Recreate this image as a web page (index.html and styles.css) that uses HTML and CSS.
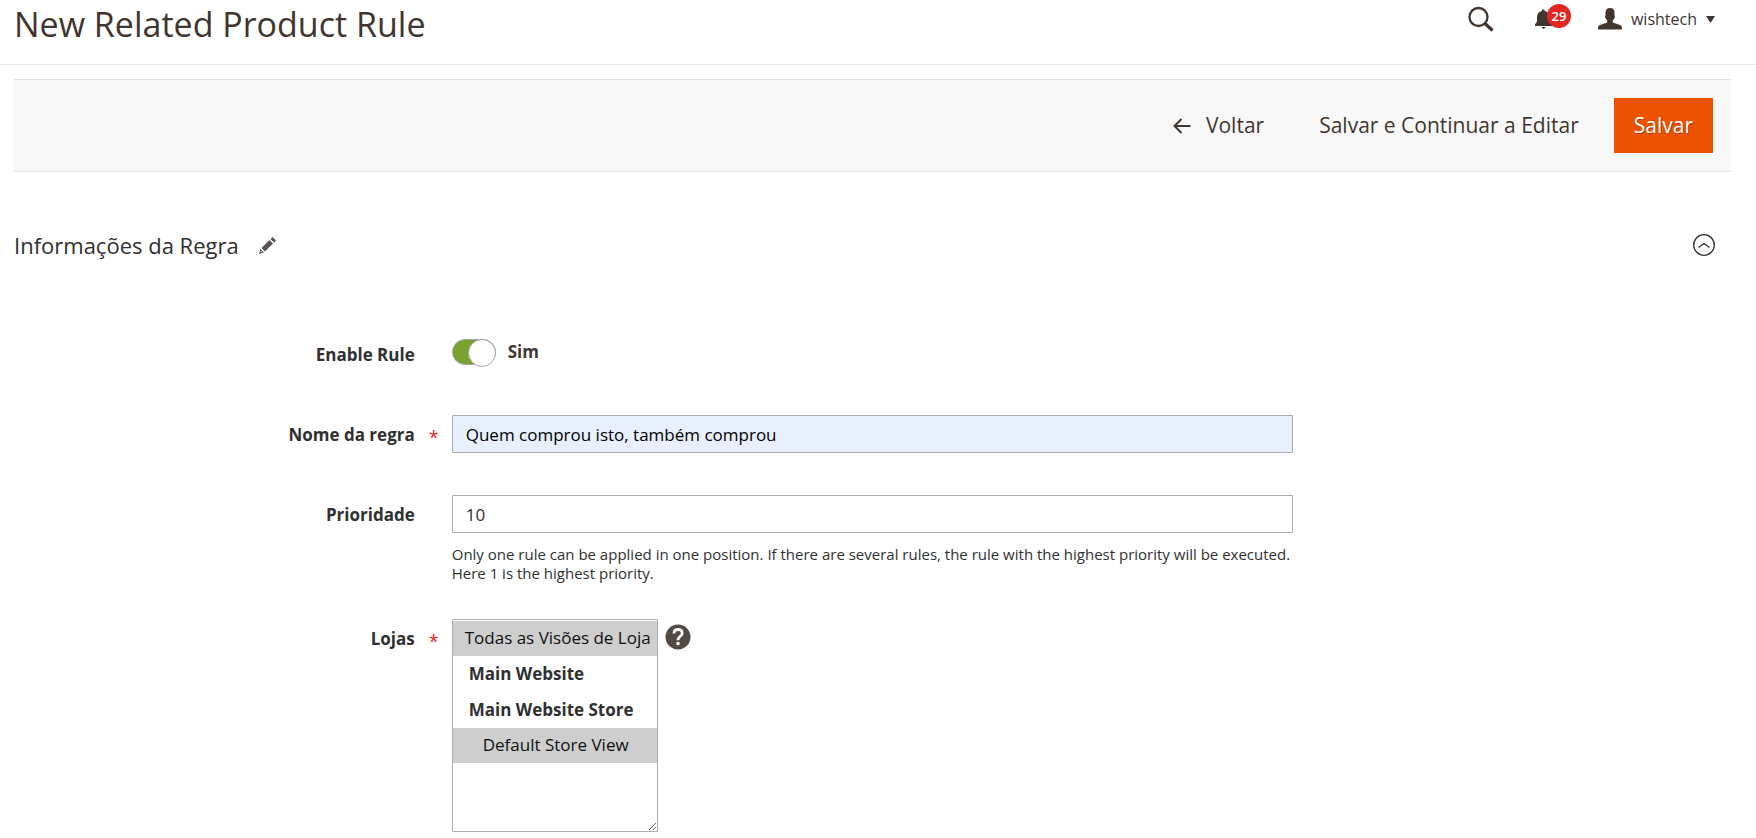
FILE: index.html
```html
<!DOCTYPE html>
<html lang="pt">
<head>
<meta charset="utf-8">
<meta name="viewport" content="width=device-width, initial-scale=1">
<title>New Related Product Rule</title>
<link rel="stylesheet" href="styles.css">
</head>
<body>
<header class="page-header">
  <h1 class="page-title">New Related Product Rule</h1>
  <div class="header-tools">
    <button type="button" class="icon-button" aria-label="Search">
      <svg width="26" height="26" viewBox="0 0 26 26" fill="none" stroke="currentColor"><circle cx="10.500" cy="11" r="9" stroke-width="2.300"/><path d="M17 17.500l7.500 7" stroke-width="3.300"/></svg>
    </button>
    <button type="button" class="icon-button notifications" aria-label="Notifications">
      <svg width="20" height="20" viewBox="0 0 20 20" fill="currentColor"><path d="M0 17v-1.500l2-3V8c0-3 2-5.500 5-6V.500h2.500V2c3 .5 5 3 5 6v4.500l2.500 3V17z"/><path d="M6 18h5l-2.500 2z"/></svg>
      <span class="badge">29</span>
    </button>
    <button type="button" class="account">
      <svg width="24" height="22" viewBox="0 0 24 22" fill="currentColor"><path d="M12 0c3 0 4.500 2 4.500 4.500v3c.8.500.5 2.500-.5 3-.3 1-.7 1.500-1.300 2v2L22 17c1.500.6 2 1.500 2 3v1.500H0V20c0-1.500.5-2.400 2-3l7.300-2.500v-2C8.700 12 8.300 11.500 8 10.500c-1-.5-1.300-2.500-.5-3v-3C7.500 2 9 0 12 0z"/></svg>
      <span>wishtech</span>
      <svg width="9" height="7" viewBox="0 0 9 7" fill="currentColor"><path d="M0 0h9L4.500 7z"/></svg>
    </button>
  </div>
</header>
<main class="page-content">
  <div class="toolbar">
    <button type="button" class="action">
      <svg width="18" height="16" viewBox="0 0 18 16" fill="none" stroke="currentColor" stroke-width="2"><path d="M17.500 8H2M8.500 1L1.500 8l7 7"/></svg>
      Voltar
    </button>
    <button type="button" class="action">Salvar e Continuar a Editar</button>
    <button type="submit" form="rule" class="action primary">Salvar</button>
  </div>
  <div class="section-head">
    <h2 class="section-title">Informações da Regra</h2>
    <svg class="pencil" width="17" height="17" viewBox="0 0 17 17" fill="currentColor"><path d="M2.500 11L10.500 3 14 6.500 6 14.500z"/><path d="M11.500 2L13.500 0 17 3.500 15 5.500z"/><path d="M1.500 12L5 15.500 0 17z"/><path d="M1.800 14l1.400 1.400" stroke="#fff" stroke-width="1"/></svg>
    <button type="button" class="collapse" aria-label="Recolher">
      <svg width="22" height="22" viewBox="0 0 22 22" fill="none" stroke="currentColor"><circle cx="11" cy="11" r="10.300" stroke-width="1.300"/><path d="M5.500 13.500L11 9.500l5.500 4" stroke-width="1.400"/></svg>
    </button>
  </div>
  <form id="rule" class="form">
    <div class="field">
      <label class="label" for="enable">Enable Rule</label>
      <div class="control switch-row">
        <input id="enable" class="switch" type="checkbox" role="switch" checked>
        <span class="switch-text">Sim</span>
      </div>
    </div>
    <div class="field">
      <label class="label" for="name">Nome da regra</label>
      <span class="required">*</span>
      <div class="control"><input id="name" class="text filled" type="text" value="Quem comprou isto, também comprou"></div>
    </div>
    <div class="field">
      <label class="label" for="priority">Prioridade</label>
      <div class="control">
        <input id="priority" class="text" type="text" value="10">
        <p class="note">Only one rule can be applied in one position. If there are several rules, the rule with the highest priority will be executed. Here 1 is the highest priority.</p>
      </div>
    </div>
    <div class="field">
      <label class="label" for="stores">Lojas</label>
      <span class="required">*</span>
      <div class="control store-row">
        <select id="stores" class="stores" multiple size="6">
          <option selected>Todas as Visões de Loja</option>
          <optgroup label="Main Website"></optgroup>
          <optgroup label="Main Website Store">
            <option selected>Default Store View</option>
          </optgroup>
        </select>
        <button type="button" class="help" aria-label="Ajuda">
          <svg width="26" height="26" viewBox="0 0 26 26" fill="none"><circle cx="13" cy="13" r="12.500" fill="currentColor"/><path d="M9 9.500C9 6.500 10.700 5.500 13 5.500s4.200 1.300 4.200 3.700c0 3-4.200 3.300-4.200 7" stroke="#fff" stroke-width="2.800"/><circle cx="13" cy="19.600" r="1.800" fill="#fff"/></svg>
        </button>
      </div>
    </div>
  </form>
</main>
</body>
</html>
```
FILE: styles.css
```css
* {
  box-sizing: border-box;
}

body {
  margin: 0;
  background: #fff;
  color: #303030;
  font-family: "Open Sans", "Noto Sans", sans-serif;
  font-size: 17px;
  line-height: 24px;
}

button,
input,
select {
  font: inherit;
  color: inherit;
}

button {
  padding: 0;
  border: 0;
  background: none;
  cursor: pointer;
}

svg {
  display: block;
  flex: none;
}

.page-header {
  display: flex;
  justify-content: space-between;
  align-items: flex-start;
  height: 65px;
  padding: 0 41px 0 14px;
  border-bottom: 1px solid #e9e9e9;
  color: #41362f;
}

.page-title {
  margin: 0;
  font-size: 34px;
  font-weight: 400;
  line-height: 48px;
}

.header-tools {
  display: flex;
  align-items: center;
  height: 38px;
}

.icon-button {
  position: relative;
  margin-right: 41px;
}

.notifications {
  margin-right: 43px;
}

.badge {
  position: absolute;
  top: -5px;
  left: 12px;
  width: 24px;
  height: 24px;
  border-radius: 12px;
  background: #e22626;
  color: #fff;
  font-size: 13px;
  font-weight: 600;
  line-height: 24px;
  text-align: center;
}

.account {
  display: flex;
  align-items: center;
  gap: 9px;
  font-size: 16px;
}

.page-content {
  padding: 14px 25px 0 14px;
}

.toolbar {
  display: flex;
  justify-content: flex-end;
  align-items: center;
  gap: 15px;
  padding: 18px;
  border: solid #e3e3e3;
  border-width: 1px 0;
  background: #f8f8f8;
}

.action {
  display: flex;
  align-items: center;
  gap: 15px;
  padding: 14px 20px;
  color: #41362f;
  font-size: 21px;
  font-weight: 500;
  line-height: 27px;
}

.primary {
  background: #eb5202;
  color: #fff;
  text-shadow: 1px 1px 0 rgba(0, 0, 0, .25);
}

.section-head {
  display: flex;
  align-items: center;
  gap: 20px;
  padding: 56px 16px 73px 0;
}

.section-title {
  margin: 0;
  font-size: 22px;
  font-weight: 500;
  line-height: 34px;
}

.pencil {
  color: #5a5450;
}

.collapse {
  margin-left: auto;
}

.form {
  display: grid;
  gap: 40px;
}

.field {
  display: grid;
  grid-template-columns: 10fr 9px 21fr 10fr;
  column-gap: 14px;
  padding-right: 23px;
}

.label {
  grid-column: 1;
  font-weight: 700;
  line-height: 40px;
  text-align: right;
}

.required {
  grid-column: 2;
  height: 40px;
  color: #e22626;
  font-size: 18px;
  line-height: 44px;
}

.control {
  grid-column: 3;
}

.switch-row {
  display: flex;
  align-items: center;
  gap: 12px;
  height: 34px;
}

.switch {
  appearance: none;
  display: flex;
  justify-content: flex-end;
  width: 44px;
  height: 26px;
  margin: 0;
  border: 1px solid #aaa6a0;
  border-radius: 13px;
  background: #79a22e;
}

.switch::before {
  content: "";
  flex: none;
  width: 26px;
  height: 26px;
  margin: -1px;
  border: 1px solid #aaa6a0;
  border-radius: 50%;
  background: #fff;
}

.switch:not(:checked) {
  justify-content: flex-start;
  background: #e3e3e3;
}

.switch-text {
  color: #41362f;
  font-weight: 700;
}

.text {
  display: block;
  width: 100%;
  height: 38px;
  padding: 0 13px;
  border: 1px solid #adadad;
  border-radius: 1px;
  background: #fff;
}

.filled {
  background: #e8f0fe;
  color: #000;
}

.note {
  margin: 12px 0 -4px;
  font-size: 15px;
  line-height: 19px;
}

.store-row {
  display: flex;
  align-items: flex-start;
  gap: 7px;
}

.stores {
  width: 206px;
  height: 213px;
  padding: 1px 0;
  border: 1px solid #adadad;
  border-radius: 1px;
  background: #fff;
  overflow: auto;
  resize: both;
}

.stores option {
  min-height: 35px;
  padding: 5px 12px 6px;
}

.stores optgroup {
  padding: 6px 0 6px 14px;
  font-weight: 700;
}

.stores optgroup option {
  margin: 6px 0 0 -14px;
  padding-left: 30px;
  font-weight: 400;
}

.help {
  margin-top: 5px;
  color: #514943;
}
```
